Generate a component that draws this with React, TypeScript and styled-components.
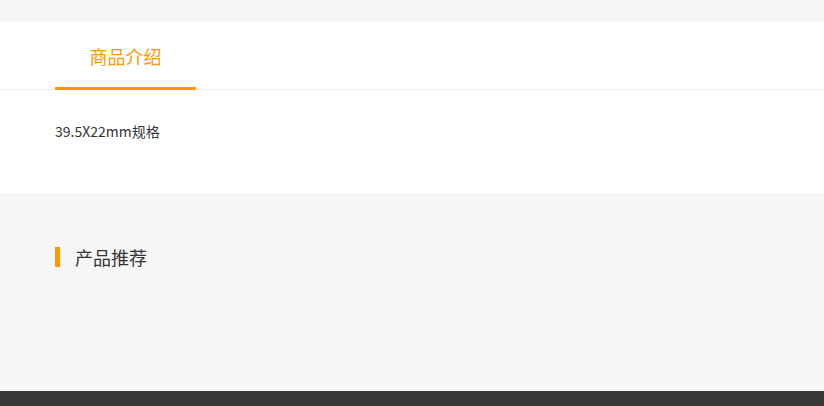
import React from 'react';
import styled, { createGlobalStyle } from 'styled-components';

const GlobalStyle = createGlobalStyle`
  html, body {
    margin: 0;
    padding: 0;
    background: #f6f6f6;
    font-family: "Microsoft YaHei", "Noto Sans CJK SC", sans-serif;
  }
`;

function App() {
  return (
    <>
      <GlobalStyle />
      <Page>
        <DetailCard>
          <TabBar>
            <Tab active>商品介绍</Tab>
          </TabBar>
          <Description>39.5X22mm规格</Description>
        </DetailCard>
        <Recommend>
          <SectionTitle>产品推荐</SectionTitle>
        </Recommend>
        <Footer />
      </Page>
    </>
  );
}

export default App;

const Page = styled.div`
  padding-top: 22px;
  min-height: 406px;
  box-sizing: border-box;
  display: flex;
  flex-direction: column;
`;

const DetailCard = styled.section`
  background: #ffffff;
  height: 171px;
`;

const TabBar = styled.div`
  display: flex;
  height: 67px;
  padding-left: 55px;
  border-bottom: 1px solid #eeeeee;
`;

const Tab = styled.div<{ active?: boolean }>`
  width: 141px;
  display: flex;
  align-items: center;
  justify-content: center;
  font-size: 18px;
  color: ${p => (p.active ? '#ff9600' : '#333333')};
  border-bottom: 3px solid ${p => (p.active ? '#ff9600' : 'transparent')};
  margin-bottom: -1px;
  box-sizing: border-box;
  padding-top: 2px;
`;

const Description = styled.p`
  margin: 0;
  padding: 31px 55px 0;
  font-size: 14px;
  line-height: 20px;
  color: #333333;
`;

const Recommend = styled.section`
  height: 198px;
  padding: 54px 55px 0;
  box-sizing: border-box;
`;

const SectionTitle = styled.h3`
  margin: 0;
  font-size: 18px;
  font-weight: normal;
  color: #333333;
  line-height: 20px;
  border-left: 5px solid #ff9600;
  padding-left: 15px;
`;

const Footer = styled.footer`
  background: #383838;
  height: 15px;
`;
